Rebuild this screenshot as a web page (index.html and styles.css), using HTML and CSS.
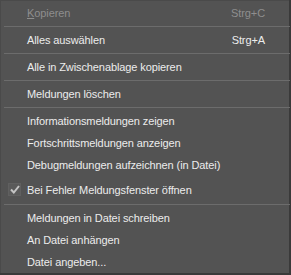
FILE: index.html
```html
<!DOCTYPE html>
<html lang="de">
<head>
  <meta charset="UTF-8">
  <title>Meldungen Kontextmenü</title>
  <link rel="stylesheet" href="styles.css">
</head>
<body>
  <!-- Context menu -->
  <div class="menu">
    <div class="item disabled"><span class="label"><u>K</u>opieren</span><span class="key">Strg+C</span></div>
    <div class="sep"></div>
    <div class="item"><span class="label">Alles auswählen</span><span class="key">Strg+A</span></div>
    <div class="sep"></div>
    <div class="item"><span class="label">Alle in Zwischenablage kopieren</span></div>
    <div class="sep"></div>
    <div class="item"><span class="label">Meldungen löschen</span></div>
    <div class="sep"></div>
    <div class="item"><span class="label">Informationsmeldungen zeigen</span></div>
    <div class="item"><span class="label">Fortschrittsmeldungen anzeigen</span></div>
    <div class="item"><span class="label">Debugmeldungen aufzeichnen (in Datei)</span></div>
    <div class="item checked">
      <span class="check">
        <svg width="10" height="9" viewBox="0 0 10 9"><path d="M1 4.5 L3.8 7.5 L9 1" fill="none" stroke="#c4c4c4" stroke-width="2"/></svg>
      </span>
      <span class="label">Bei Fehler Meldungsfenster öffnen</span>
    </div>
    <div class="sep"></div>
    <div class="item"><span class="label">Meldungen in Datei schreiben</span></div>
    <div class="item"><span class="label">An Datei anhängen</span></div>
    <div class="item"><span class="label">Datei angeben...</span></div>
  </div>
</body>
</html>
```

FILE: styles.css
```css
/* Global */
body {
  margin: 0;
  background: #3a3a3a;
  font-family: "Liberation Sans", Arial, sans-serif;
  font-size: 11px;
  color: #ececec;
}
/* Menu box */
.menu {
  width: 289px;
  height: 273px;
  box-sizing: border-box;
  background: #535353;
  border-left: 1px solid #4a4a4a;
  border-top: 1px solid #4a4a4a;
  padding: 1px 0 0 3px;
}
.item {
  position: relative;
  display: flex;
  align-items: center;
  height: 22px;
  padding: 0 23px 0 23px;
  letter-spacing: -0.1px;
}
.item .label {
  flex: 1;
}
.item .key {
  margin-right: 1px;
}
.item.disabled {
  color: #8e8e8e;
}
.item.checked {
  height: 26px;
  padding-top: 2px;
  box-sizing: border-box;
}
/* Check box on the left */
.check {
  position: absolute;
  left: 4px;
  top: 7px;
  width: 13px;
  height: 13px;
  display: flex;
  align-items: center;
  justify-content: center;
  background: #5a5a5a;
  box-shadow: inset 0 0 0 1px #606060;
}
/* Separator */
.sep {
  height: 5px;
  display: flex;
  align-items: center;
}
.sep::before {
  content: "";
  flex: 1;
  height: 1px;
  margin-right: -1px;
  background: #6c6c6c;
}
```
